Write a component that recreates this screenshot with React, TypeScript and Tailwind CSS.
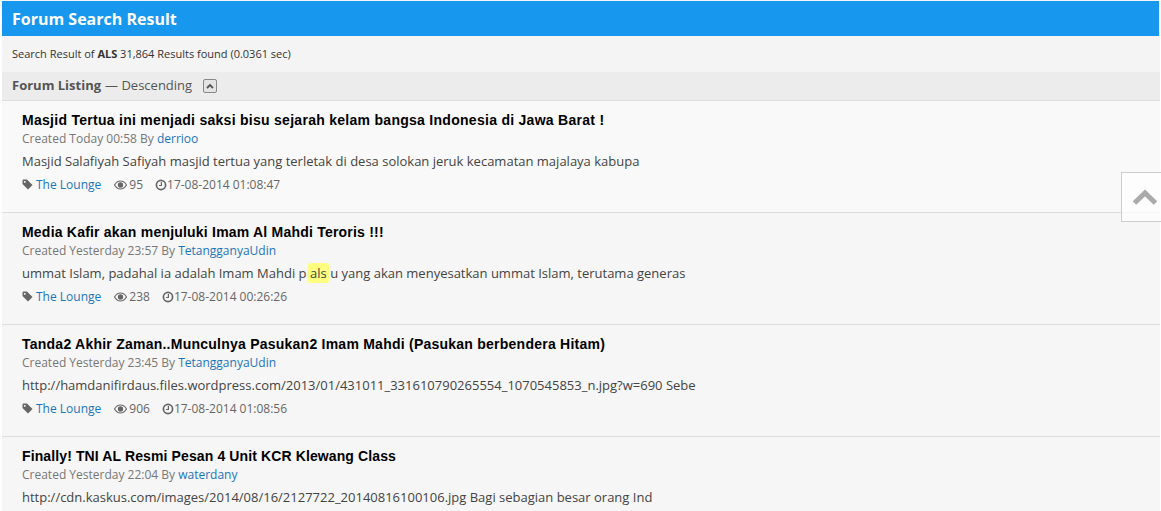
import React from 'react';

const OPEN = '"Open Sans", sans-serif';

const POSTS = [
  {
    title: 'Masjid Tertua ini menjadi saksi bisu sejarah kelam bangsa Indonesia di Jawa Barat !',
    tracking: 'tracking-[0.28px]',
    created: 'Today 00:58',
    author: 'derrioo',
    body: <>Masjid Salafiyah Safiyah masjid tertua yang terletak di desa solokan jeruk kecamatan majalaya kabupa</>,
    views: '95',
    date: '17-08-2014 01:08:47',
  },
  {
    title: 'Media Kafir akan menjuluki Imam Al Mahdi Teroris !!!',
    tracking: 'tracking-[0.21px]',
    created: 'Yesterday 23:57',
    author: 'TetangganyaUdin',
    body: (
      <>
        ummat Islam, padahal ia adalah Imam Mahdi p
        <span className="bg-[#ffff80] rounded-[2px] px-[2px] py-[1px] mx-[1.5px]">als</span>
        u yang akan menyesatkan ummat Islam, terutama generas
      </>
    ),
    views: '238',
    date: '17-08-2014 00:26:26',
  },
  {
    title: 'Tanda2 Akhir Zaman..Munculnya Pasukan2 Imam Mahdi (Pasukan berbendera Hitam)',
    tracking: 'tracking-[0.24px]',
    created: 'Yesterday 23:45',
    author: 'TetangganyaUdin',
    body: <>http://hamdanifirdaus.files.wordpress.com/2013/01/431011_331610790265554_1070545853_n.jpg?w=690 Sebe</>,
    views: '906',
    date: '17-08-2014 01:08:56',
  },
  {
    title: 'Finally! TNI AL Resmi Pesan 4 Unit KCR Klewang Class',
    tracking: 'tracking-[0.115px]',
    created: 'Yesterday 22:04',
    author: 'waterdany',
    body: <>http://cdn.kaskus.com/images/2014/08/16/2127722_20140816100106.jpg Bagi sebagian besar orang Ind</>,
    views: '',
    date: '',
  },
];

const TagIcon = () => (
  <svg width="11" height="11" viewBox="0 0 11 11" fill="#666" className="mr-[3px]">
    <path d="M0.5 1.5C0.5 1 1 0.5 1.5 0.5H5L10.5 6L6 10.5L0.5 5ZM2.8 2A0.9 0.9 0 1 0 2.81 2Z" fillRule="evenodd" />
  </svg>
);

const EyeIcon = () => (
  <svg width="13" height="10" viewBox="0 0 13 10" className="mr-[2px]">
    <path d="M0.5 5C2 2.4 4 1 6.5 1S11 2.4 12.5 5C11 7.6 9 9 6.5 9S2 7.6 0.5 5Z" fill="#fff" stroke="#666" strokeWidth="1.2" />
    <circle cx="6.5" cy="5" r="2.7" fill="#666" />
  </svg>
);

const Clock = () => (
  <svg width="12" height="12" viewBox="0 0 12 12" fill="none" stroke="#666">
    <circle cx="6" cy="6" r="4.6" strokeWidth="1.7" />
    <path d="M6.4 3V6.5H4" strokeWidth="1.2" />
  </svg>
);

export default function App() {
  return (
    <div className="h-[511px] overflow-hidden bg-white relative" style={{ fontFamily: OPEN }}>
      <div className="ml-[2px] mr-[1px] bg-[#f4f4f4] pt-[1px]">
        <div className="h-[35px] mr-[1px] bg-[#1797ee] pl-[10px] flex items-center text-white text-[16px] font-bold">
          Forum Search Result
        </div>
        <div className="h-[36px] pl-[10px] flex items-center text-[11px] text-[#333]">
          <span>
            Search Result of <b>ALS</b> 31,864 Results found (0.0361 sec)
          </span>
        </div>
        <div className="h-[29px] pl-[10px] flex items-center bg-[#ececec] border-b border-[#ddd] text-[13px] text-[#555]">
          <b>Forum Listing</b>
          <span className="ml-[4px]">— Descending</span>
          <span className="ml-[11px] w-[14px] h-[14px] border border-[#888] rounded-[2px] flex items-center justify-center bg-[#e4e4e4]">
            <svg width="8" height="6" viewBox="0 0 8 6" fill="none" stroke="#555" strokeWidth="1.8">
              <path d="M1 5L4 2L7 5" />
            </svg>
          </span>
        </div>
        {POSTS.map((p, i) => (
          <div
            key={i}
            className={`h-[112px] pl-[20px] pt-[10px] border-b border-[#ddd] ${i === 0 ? 'bg-[#f9f9f9]' : 'bg-[#f6f6f6]'}`}
          >
            <div
              className={`text-[14px] leading-[19px] font-bold text-black ${p.tracking}`}
              style={{ fontFamily: '"Liberation Sans", sans-serif' }}
            >
              {p.title}
            </div>
            <div className="text-[12px] leading-[17px] text-[#777]">
              Created {p.created} By <span className="text-[#1b75bb]">{p.author}</span>
            </div>
            <div className="text-[13px] leading-[18px] mt-[5px] text-[#444]">{p.body}</div>
            {p.views && (
              <div className="flex items-center text-[12px] leading-[17px] mt-[6px] text-[#666]">
                <TagIcon />
                <span className="text-[#1b75bb]">The Lounge</span>
                <span className="ml-[13px] flex items-center">
                  <EyeIcon />
                  {p.views}
                </span>
                <span className="ml-[12px] flex items-center">
                  <Clock />
                  {p.date}
                </span>
              </div>
            )}
          </div>
        ))}
      </div>
      <div className="absolute left-[1121px] top-[172px] w-[40px] h-[50px] bg-white/70 border border-[#ccc] border-r-0 flex items-center justify-center">
        <svg width="26" height="18" viewBox="0 0 26 18" fill="none" stroke="#aaa" strokeWidth="5" className="ml-[7px] mt-[1px]">
          <path d="M2.5 14L13 4L23.5 14" />
        </svg>
      </div>
    </div>
  );
}
